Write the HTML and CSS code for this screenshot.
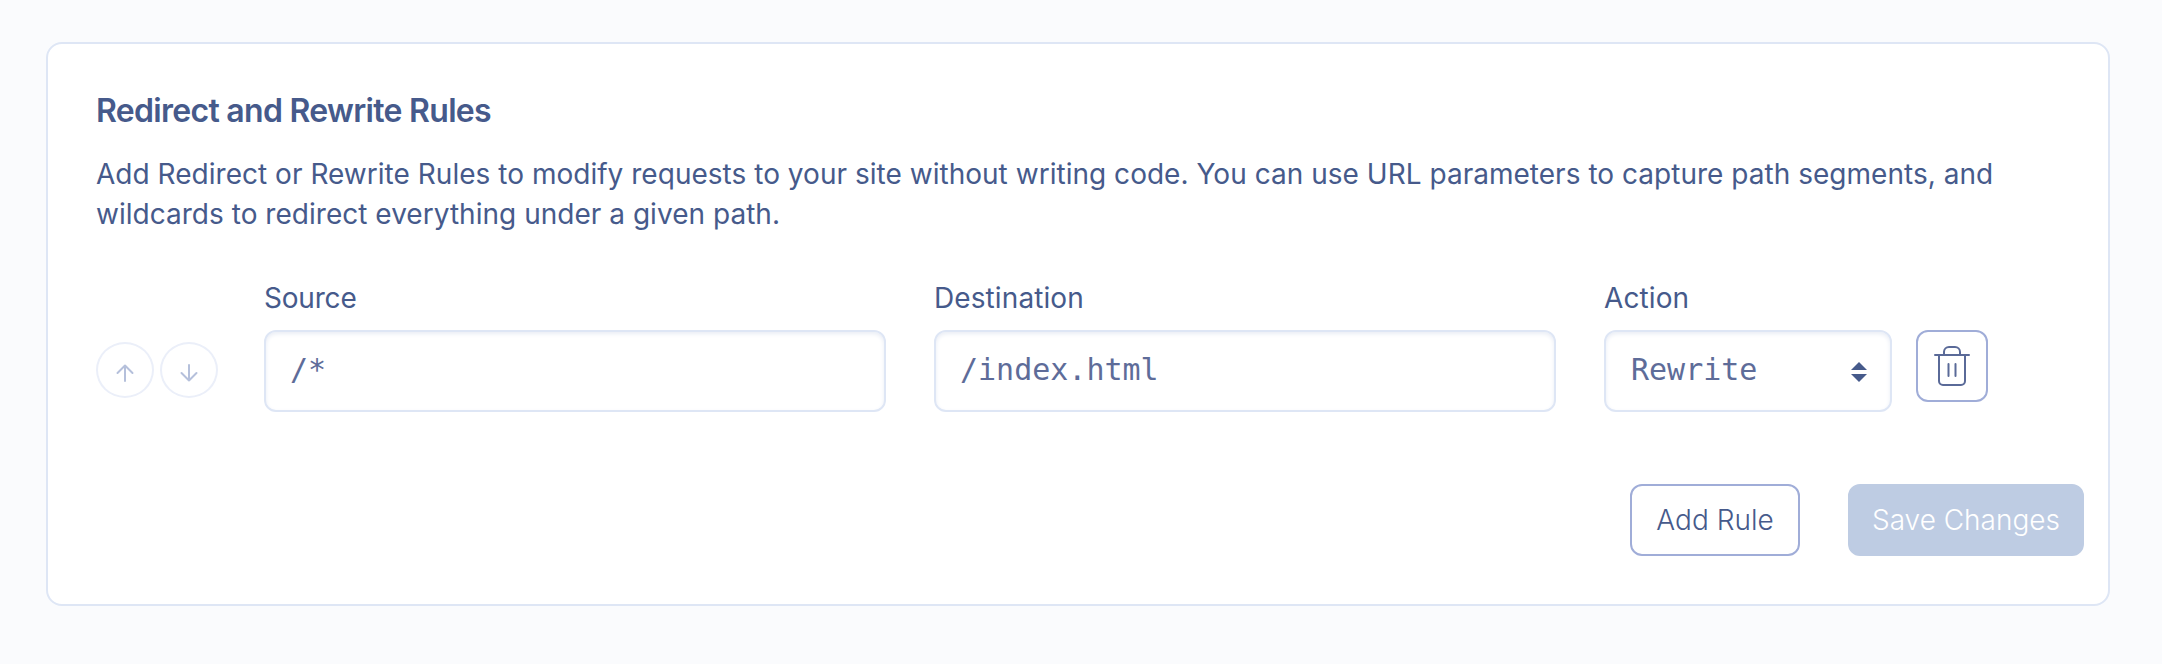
FILE: index.html
```html
<!DOCTYPE html>
<html lang="en">
<head>
<meta charset="utf-8">
<title>Redirect and Rewrite Rules</title>
<link rel="stylesheet" href="styles.css">
</head>
<body>
<main class="card">
  <h2 class="title">Redirect and Rewrite Rules</h2>
  <p class="description">Add Redirect or Rewrite Rules to modify requests to your site without writing code. You can use URL parameters to capture path segments, and<br>wildcards to redirect everything under a given path.</p>
  <div class="rule">
    <div class="order">
      <button class="round" aria-label="Move up"><svg class="arrow" viewBox="0 0 18 18"><path d="M9 17V1.500M1.500 9 9 1.500 16.500 9"/></svg></button>
      <button class="round" aria-label="Move down"><svg class="arrow" viewBox="0 0 18 18"><path d="M9 1v15.500M1.500 9 9 16.500 16.500 9"/></svg></button>
    </div>
    <div class="field">
      <span class="label">Source</span>
      <div class="control">/*</div>
    </div>
    <div class="field">
      <span class="label label-wide">Destination</span>
      <div class="control">/index.html</div>
    </div>
    <div class="field field-action">
      <span class="label label-wide">Action</span>
      <div class="control">Rewrite<svg class="sort" viewBox="0 0 16 20"><path d="M0 8 8 0l8 8zM0 12h16l-8 8z"/></svg></div>
    </div>
    <button class="delete" aria-label="Delete rule"><svg class="trash" viewBox="0 0 36 40"><path d="M1 9h34M5 9v26a4 4 0 0 0 4 4h18a4 4 0 0 0 4-4V9M10 9V6a5 5 0 0 1 5-5h6a5 5 0 0 1 5 5v3M14.500 18v12M21.500 18v12"/></svg></button>
  </div>
  <div class="actions">
    <button class="button add">Add Rule</button>
    <button class="button save">Save Changes</button>
  </div>
</main>
</body>
</html>
```
FILE: styles.css
```css
* { box-sizing: border-box; }
body {
  margin: 0;
  padding: 42px 52px 58px 46px;
  height: 664px;
  background: #fafbfd;
  color: #465a8b;
  font-family: Inter, "Liberation Sans", sans-serif;
}
button { padding: 0; background: #fff; font-family: inherit; }
svg { fill: none; stroke-linecap: round; stroke-linejoin: round; }
.card {
  height: 564px;
  padding: 47px 24px 48px 48px;
  background: #fff;
  border: 2px solid #dee6f5;
  border-radius: 16px;
}
.title {
  margin: 0;
  font-size: 32px;
  line-height: 40px;
  font-weight: 600;
  letter-spacing: -0.7px;
}
.description {
  margin: 23px 0 0;
  font-size: 28px;
  line-height: 40px;
  letter-spacing: 0.025px;
  white-space: nowrap;
}
.rule { display: flex; margin-top: 44px; }
.order { display: flex; gap: 6px; width: 168px; padding-top: 64px; }
.round {
  display: flex;
  justify-content: center;
  width: 58px;
  height: 56px;
  padding-top: 20px;
  border: 2px solid #ebeff9;
  border-radius: 50%;
}
.arrow { width: 18px; height: 18px; stroke: #b5c0db; stroke-width: 2; }
.field { width: 622px; margin-right: 48px; }
.field-action { width: 288px; margin-right: 24px; }
.label {
  display: block;
  height: 52px;
  font-size: 28px;
  line-height: 40px;
  letter-spacing: -0.2px;
}
.label-wide { letter-spacing: 0.1px; }
.control {
  display: flex;
  align-items: center;
  justify-content: space-between;
  height: 82px;
  padding: 0 23px 3px 24px;
  border: 2px solid #dee6f5;
  border-radius: 12px;
  box-shadow: inset 0 2px 4px #e9edf5;
  color: #5e6c99;
  font: 30px "DejaVu Sans Mono", monospace;
}
.field-action .control { padding-left: 25px; }
.sort { width: 16px; height: 20px; margin: 5px 0 0; fill: #465a8b; }
.delete {
  display: flex;
  justify-content: center;
  align-items: center;
  width: 72px;
  height: 72px;
  margin-top: 52px;
  border: 2px solid #a0add8;
  border-radius: 12px;
}
.trash { width: 36px; height: 40px; stroke: #5a6a98; stroke-width: 2; }
.actions { display: flex; justify-content: flex-end; gap: 48px; margin-top: 72px; }
.button {
  height: 72px;
  border: 2px solid #a0add8;
  border-radius: 12px;
  color: #465a8b;
  font-size: 28px;
  font-weight: 300;
}
.add { width: 170px; }
.save { width: 236px; border-color: #becce3; background: #becce3; color: #fff; }
```
